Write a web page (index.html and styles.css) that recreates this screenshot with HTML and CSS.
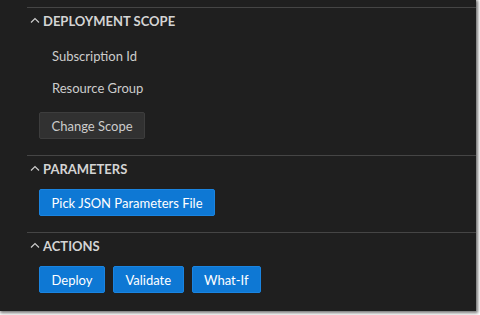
FILE: index.html
```html
<!DOCTYPE html>
<html>
<head>
<meta charset="utf-8">
<link rel="stylesheet" href="styles.css">
</head>
<body>
<div class="panel">
  <section class="section first">
    <div class="header"><svg class="chev" width="10" height="6" viewBox="0 0 10 6"><path d="M1 5.5 L5 1.5 L9 5.5" fill="none" stroke="#cccccc" stroke-width="1.2"/></svg><span>DEPLOYMENT SCOPE</span></div>
    <div class="items">
      <div class="item">Subscription Id</div>
      <div class="item">Resource Group</div>
    </div>
    <div class="btnrow"><button class="btn secondary">Change Scope</button></div>
  </section>
  <section class="section">
    <div class="header"><svg class="chev" width="10" height="6" viewBox="0 0 10 6"><path d="M1 5.5 L5 1.5 L9 5.5" fill="none" stroke="#cccccc" stroke-width="1.2"/></svg><span>PARAMETERS</span></div>
    <div class="btnrow"><button class="btn primary">Pick JSON Parameters File</button></div>
  </section>
  <section class="section last">
    <div class="header"><svg class="chev" width="10" height="6" viewBox="0 0 10 6"><path d="M1 5.5 L5 1.5 L9 5.5" fill="none" stroke="#cccccc" stroke-width="1.2"/></svg><span>ACTIONS</span></div>
    <div class="btnrow"><button class="btn primary">Deploy</button><button class="btn primary">Validate</button><button class="btn primary">What-If</button></div>
  </section>
</div>
</body>
</html>
```
FILE: styles.css
```css
html, body {
  margin: 0;
  padding: 0;
  background: #ffffff;
}
body {
  width: 480px;
  height: 315px;
  overflow: hidden;
  font-family: "Lato", "Liberation Sans", sans-serif;
}
.panel {
  width: 476px;
  height: 311px;
  background: #1f1f1f;
  box-shadow: 1px 1px 3px 1px rgba(0,0,0,0.55);
  padding-top: 7px;
  padding-left: 27px;
  box-sizing: border-box;
}
.section {
  border-top: 1px solid #454545;
}
.first { padding-bottom: 16px; }
.section + .section { padding-bottom: 16px; }
.header {
  height: 26px;
  display: flex;
  align-items: center;
  padding-left: 3px;
  gap: 3px;
  color: #d4d4d4;
  font-weight: 700;
  font-size: 13px;
}
.chev { display: block; margin-top: -2px; }
.items {
  margin-top: 6px;
}
.item {
  height: 32px;
  line-height: 32px;
  padding-left: 25px;
  color: #cccccc;
  font-size: 13px;
}
.first .btnrow { margin-top: 8px; }
.btnrow {
  display: flex;
  gap: 8px;
  padding-left: 12px;
  margin-top: 7px;
}
.btn {
  font-family: inherit;
  font-size: 13px;
  height: 27px;
  padding: 0 11.5px;
  border-radius: 2px;
  cursor: pointer;
}
.primary {
  background: #0e78d4;
  border: 1px solid #1a84e0;
  color: #ffffff;
}
.secondary {
  background: #313131;
  border: 1px solid #3d3d3d;
  color: #cccccc;
}
```
